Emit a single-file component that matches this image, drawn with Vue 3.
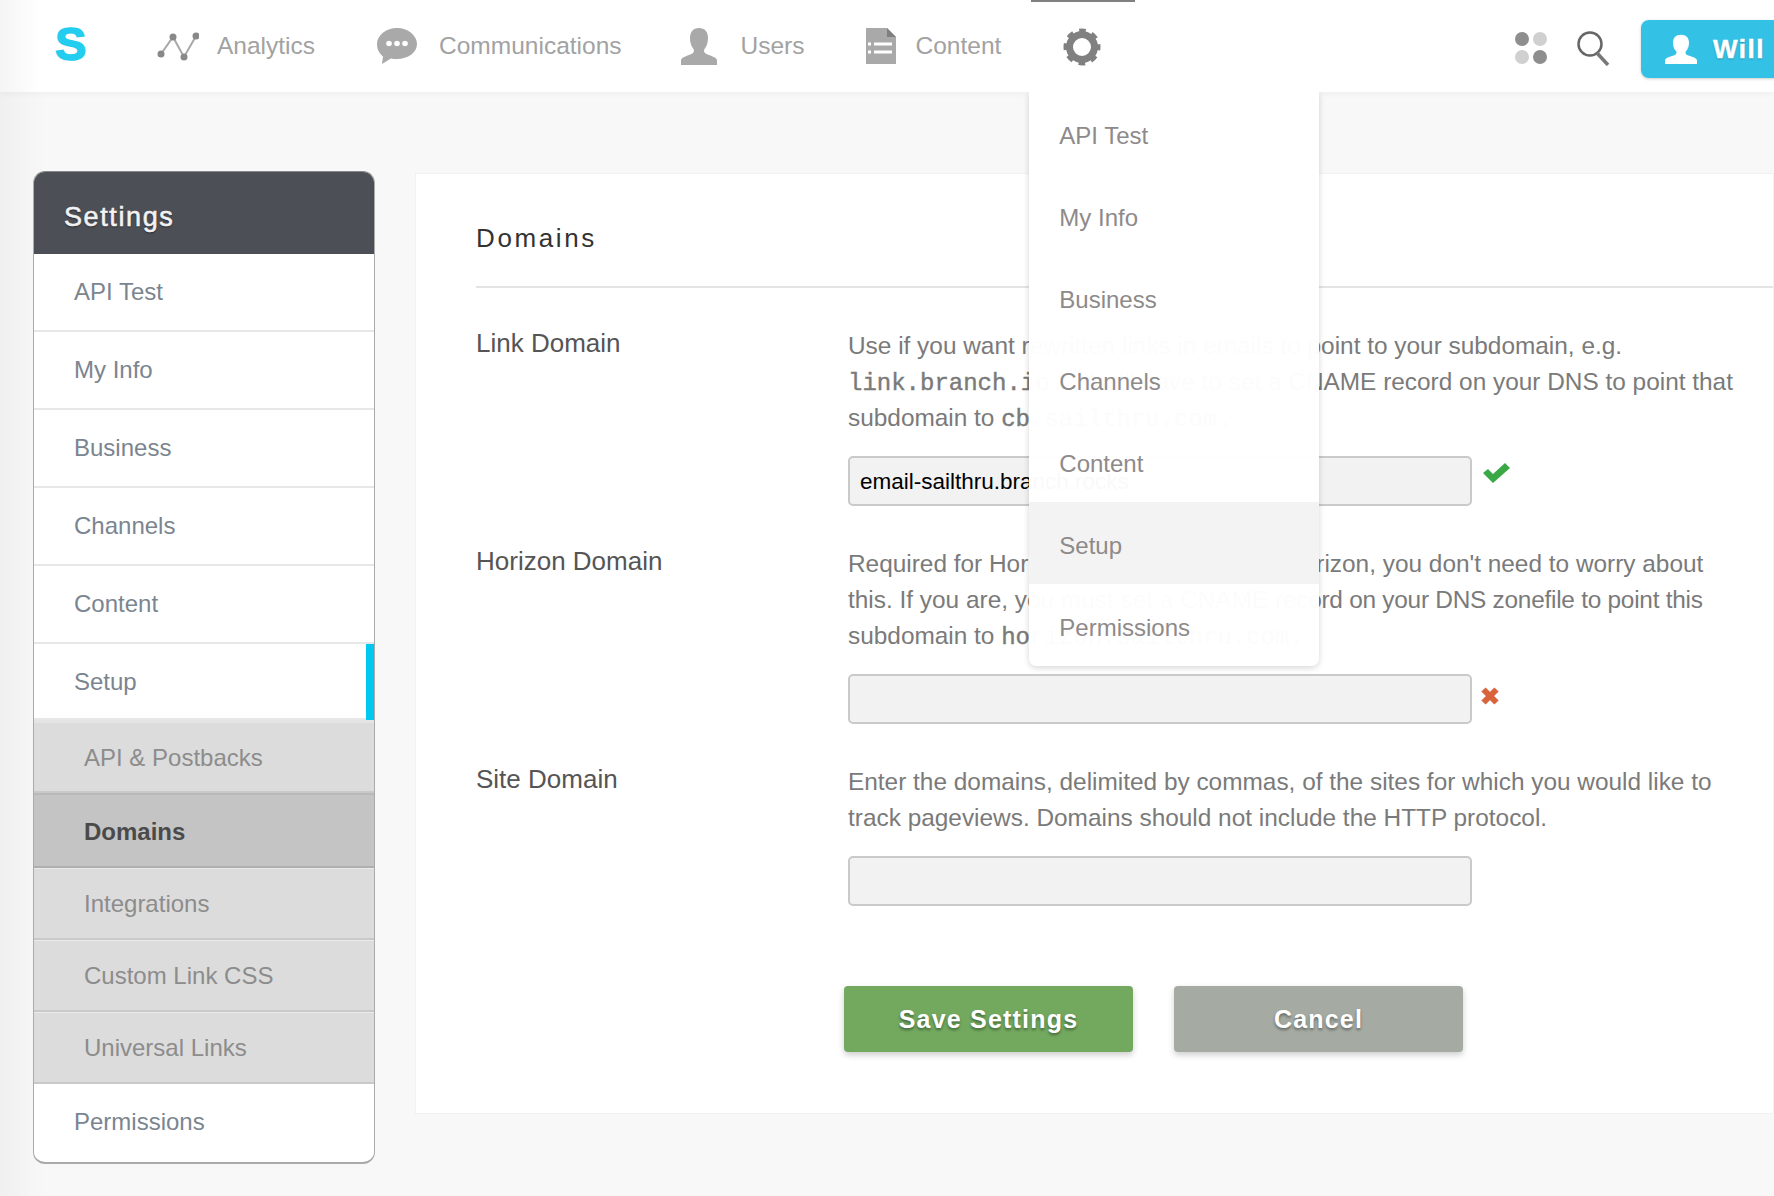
<template>
  <div class="page">
    <header class="topbar">
      <a class="logo">S</a>
      <nav class="nav">
        <a class="nav-item analytics">
          <svg width="42" height="30" viewBox="0 0 42 30">
            <path d="M4 23 L16 6 L27 26 L39 5" fill="none" stroke="#a8a8a8" stroke-width="2" />
            <circle cx="4" cy="23" r="3.5" fill="#888" />
            <circle cx="16" cy="6" r="3.5" fill="#888" />
            <circle cx="27" cy="26" r="3.5" fill="#888" />
            <circle cx="39" cy="5" r="3.5" fill="#888" />
          </svg>
          <span>Analytics</span>
        </a>
        <a class="nav-item comms">
          <svg width="40" height="38" viewBox="0 0 40 38">
            <path d="M20 1C9 1 0 8.500 0 17c0 6 3 10 6 12.500L5 37l9-5.500c2 .4 4 .5 6 .5 11 0 20-6.500 20-15S31 1 20 1z" fill="#a9a9a9" />
            <circle cx="12" cy="16.500" r="2.800" fill="#fff" />
            <circle cx="20" cy="16.500" r="2.800" fill="#fff" />
            <circle cx="28" cy="16.500" r="2.800" fill="#fff" />
          </svg>
          <span>Communications</span>
        </a>
        <a class="nav-item users">
          <svg width="36" height="38" viewBox="0 0 36 38">
            <path d="M18 1c-6 0-9 4-9 10 0 4 1 8 3.500 11 1 1.500.5 4-2 5C6 29 1 30 0 33v5h36v-5c-1-3-6-4-10.500-6-2.500-1-3-3.500-2-5C26 19 27 15 27 11c0-6-3-10-9-10z" fill="#a9a9a9" />
          </svg>
          <span>Users</span>
        </a>
        <a class="nav-item docs">
          <svg width="30" height="36" viewBox="0 0 30 36">
            <path d="M0 0h21l9 9v27H0z" fill="#a9a9a9" />
            <path d="M21 0l9 9h-9z" fill="#7f7f7f" />
            <path d="M2 16h3M8 16h18M2 24h3M8 24h18" stroke="#fff" stroke-width="3" />
          </svg>
          <span>Content</span>
        </a>
        <div class="settings-item">
          <svg width="38" height="38" viewBox="0 0 38 38">
            <circle cx="19" cy="19" r="16" fill="none" stroke="#808080" stroke-width="5" stroke-dasharray="6.400 6.160" stroke-dashoffset="3.200" />
            <circle cx="19" cy="19" r="12.500" fill="none" stroke="#808080" stroke-width="7" />
          </svg>
          <ul class="dropdown">
            <li v-for="item in menu" :key="item" :class="{ hover: item === 'Setup' }">{{ item }}</li>
          </ul>
        </div>
      </nav>
      <div class="tools">
        <span class="apps">
          <i class="dark"></i><i></i><i></i><i class="dark"></i>
        </span>
        <svg class="search" width="34" height="36" viewBox="0 0 34 36">
          <circle cx="14" cy="14" r="11.500" fill="none" stroke="#666" stroke-width="2.500" />
          <path d="M21 23l11 12" stroke="#777" stroke-width="3.500" />
        </svg>
        <a class="user-btn">
          <svg width="32" height="30" viewBox="0 0 36 38" preserveAspectRatio="none">
            <path d="M18 1c-6 0-9 4-9 10 0 4 1 8 3.500 11 1 1.500.5 4-2 5C6 29 1 30 0 33v5h36v-5c-1-3-6-4-10.500-6-2.500-1-3-3.500-2-5C26 19 27 15 27 11c0-6-3-10-9-10z" fill="#fff" />
          </svg>
          <span>Will</span>
        </a>
      </div>
    </header>

    <div class="body">
      <aside class="sidebar">
        <h3>Settings</h3>
        <ul>
          <li v-for="item in menu.slice(0, 6)" :key="item" class="row" :class="{ current: item === 'Setup' }">{{ item }}</li>
          <li
            v-for="sub in subMenu"
            :key="sub"
            class="sub"
            :class="{ active: sub === 'Domains' }"
          >{{ sub }}</li>
          <li class="row last">Permissions</li>
        </ul>
      </aside>

      <main class="panel">
        <h2>Domains</h2>
        <form class="form" @submit.prevent>
          <div class="field">
            <label>Link Domain</label>
            <div class="control">
              <p>Use if you want rewritten links in emails to point to your subdomain, e.g.<br><code class="keep">link.branch.io. </code>You'll have to set a CNAME record on your DNS to point that<br>subdomain to <code>cb.sailthru.com.</code></p>
              <div class="input-row">
                <input type="text" value="email-sailthru.branch.rocks">
                <svg class="status ok" width="27" height="20" viewBox="0 0 27 20">
                  <path d="M0 10L5 6L10 11L22 0L27 5L10 20Z" fill="#3aa845" />
                </svg>
              </div>
            </div>
          </div>
          <div class="field">
            <label>Horizon Domain</label>
            <div class="control">
              <p>Required for Horizon. If you're not using Horizon, you don't need to worry about<br>this. If you are, you must set a CNAME <span class="tight">record on your DNS zonefile to point this</span><br>subdomain to <code>horizon.sailthru.com.</code></p>
              <div class="input-row">
                <input type="text">
                <svg class="status bad" width="20" height="20" viewBox="0 0 20 20">
                  <path d="M3.500 3.500L16.500 16.500M16.500 3.500L3.500 16.500" stroke="#d9633a" stroke-width="6" />
                </svg>
              </div>
            </div>
          </div>
          <div class="field">
            <label>Site Domain</label>
            <div class="control">
              <p>Enter the domains, delimited by commas, of the sites for which you would like to<br>track pageviews. Domains should not include the HTTP protocol.</p>
              <div class="input-row">
                <input type="text">
              </div>
            </div>
          </div>
          <div class="actions">
            <button class="save">Save Settings</button>
            <button class="cancel">Cancel</button>
          </div>
        </form>
      </main>
    </div>
  </div>
</template>

<script setup>
const menu = ['API Test', 'My Info', 'Business', 'Channels', 'Content', 'Setup', 'Permissions'];
const subMenu = ['API & Postbacks', 'Domains', 'Integrations', 'Custom Link CSS', 'Universal Links'];
</script>

<style>
html, body {
  margin: 0;
  background: #f8f8f8;
}
</style>

<style scoped>
.page {
  width: 1774px;
  height: 1196px;
  overflow: hidden;
  font-family: "Liberation Sans", Arial, sans-serif;
  background: linear-gradient(to right, #f0f0f0, #f8f8f8 45px);
}

ul {
  margin: 0;
  padding: 0;
  list-style: none;
}

/* top bar */
.topbar {
  height: 92px;
  display: flex;
  align-items: center;
  background: linear-gradient(to right, #f5f5f5, #fff 40px);
  box-shadow: 0 2px 6px rgba(0, 0, 0, 0.04);
  position: relative;
  z-index: 2;
}

.logo {
  width: 157px;
  height: 92px;
  padding-left: 55px;
  box-sizing: border-box;
  flex: none;
  font-size: 47px;
  font-weight: bold;
  color: #22cdef;
  -webkit-text-stroke: 1.5px #22cdef;
  line-height: 88px;
}

.nav {
  display: flex;
  align-items: center;
  height: 92px;
}

.nav-item {
  display: flex;
  align-items: center;
  font-size: 24.5px;
  color: #a2a2a2;
}

.nav-item svg {
  flex: none;
}

.analytics { gap: 18px; margin-right: 62px; }
.comms { gap: 22px; margin-right: 59px; }
.users { gap: 24px; margin-right: 61px; }
.docs { gap: 20px; margin-right: 30px; }

.settings-item {
  position: relative;
  width: 104px;
  height: 92px;
  display: flex;
  align-items: center;
  justify-content: center;
  box-sizing: border-box;
  border-top: 2px solid #808080;
  padding-right: 2px;
}

.dropdown {
  position: absolute;
  left: -2px;
  top: 90px;
  width: 290px;
  background: rgba(255, 255, 255, 0.975);
  border-radius: 0 0 8px 8px;
  box-shadow: 0 2px 6px rgba(0, 0, 0, 0.16);
  clip-path: inset(0 -10px -10px -10px);
  z-index: 3;
}

.dropdown li {
  height: 82px;
  line-height: 87px;
  padding-left: 30px;
  font-size: 24px;
  color: #8e8a8a;
}

.dropdown li.hover {
  background: rgba(243, 243, 243, 0.98);
}

.tools {
  margin-left: auto;
  display: flex;
  align-items: center;
  flex: none;
  width: 259px;
}

.apps {
  flex: none;
  display: grid;
  grid-template-columns: 14px 14px;
  gap: 4px;
  margin: 4px 29px 0 0;
}

.apps i {
  width: 14px;
  height: 14px;
  border-radius: 50%;
  background: #d0d0d0;
}

.apps i.dark {
  background: #8e8e8e;
}

.search {
  flex: none;
  margin: 4px 31px 0 0;
}

.user-btn {
  height: 58px;
  width: 170px;
  flex: none;
  margin-top: 6px;
  background: #33c1e6;
  border-radius: 8px 0 0 8px;
  display: flex;
  align-items: center;
  gap: 16px;
  padding-left: 24px;
  box-sizing: border-box;
  box-shadow: 0 1px 3px rgba(0, 0, 0, 0.2);
  color: #fff;
  font-size: 26px;
  font-weight: bold;
  letter-spacing: 1.5px;
  -webkit-text-stroke: 0.5px #fff;
  text-shadow: 0 1px 2px rgba(0, 0, 0, 0.3);
}

/* page body */
.body {
  display: flex;
  align-items: flex-start;
  padding: 79px 0 0 33px;
  gap: 40px;
}

.sidebar {
  width: 342px;
  flex: none;
  box-sizing: border-box;
  border: 1px solid #aaa;
  border-top-color: #888;
  border-bottom-width: 2px;
  border-radius: 12px;
  overflow: hidden;
  background: #fff;
}

.sidebar h3 {
  margin: 0;
  height: 82px;
  line-height: 90px;
  background: #4d4f56;
  color: #f2f2f2;
  font-size: 27px;
  font-weight: normal;
  letter-spacing: 1.6px;
  padding-left: 30px;
  text-shadow: 0 1px 2px rgba(0, 0, 0, 0.6);
  -webkit-text-stroke: 0.6px #f2f2f2;
}

.row {
  height: 78px;
  box-sizing: border-box;
  line-height: 76px;
  padding-left: 40px;
  font-size: 24px;
  color: #7b8590;
  border-bottom: 2px solid #e7e7e7;
  position: relative;
}

.row.current {
  height: 76px;
}

.row.current::after {
  content: "";
  position: absolute;
  right: 0;
  top: 0;
  bottom: -2px;
  width: 8px;
  background: #00c8ee;
}

.row.last {
  border-bottom: none;
  height: 78px;
}

.sub {
  height: 72px;
  box-sizing: border-box;
  line-height: 70px;
  padding-left: 50px;
  font-size: 24px;
  color: #8c8c8c;
  background: #dcdcdc;
  border-bottom: 2px solid #c9c9c9;
  border-top: 1px solid #eaeaea;
}

.sub:nth-child(7) {
  height: 73px;
  line-height: 70px;
  border-top: 3px solid #e4e4e4;
}

.sub.active {
  height: 75px;
  line-height: 74px;
  background: #c4c4c4;
  color: #4a4a4a;
  font-weight: bold;
  border-top: 2px solid #b9b9b9;
  border-bottom: 2px solid #afafaf;
}

.panel {
  flex: 1;
  min-width: 0;
  height: 941px;
  margin-top: 2px;
  box-sizing: border-box;
  background: #fff;
  border: 1px solid #f1f1f1;
  padding-left: 60px;
}

.panel h2 {
  margin: 0;
  height: 114px;
  line-height: 129px;
  box-sizing: border-box;
  border-bottom: 2px solid #e4e4e4;
  font-size: 26px;
  font-weight: normal;
  letter-spacing: 2.6px;
  color: #333;
}

.form {
  padding-top: 39px;
}

.field {
  display: grid;
  grid-template-columns: 372px 1fr;
}

.field label {
  font-size: 26px;
  color: #555;
  line-height: 32px;
}

.control {
  padding-bottom: 39px;
}

.control p {
  margin: 0 0 20px;
  padding-top: 1px;
  font-size: 24.4px;
  line-height: 36px;
  color: #7a7a7a;
  white-space: nowrap;
}

.control code {
  font-family: "Liberation Mono", monospace;
  font-size: 24px;
  line-height: 0;
  -webkit-text-stroke: 0.4px #7a7a7a;
}

.control code.keep {
  white-space: pre;
}

.tight {
  letter-spacing: -0.25px;
}

.input-row {
  display: flex;
  align-items: flex-start;
}

.input-row input {
  width: 624px;
  height: 50px;
  box-sizing: border-box;
  background: #f2f2f2;
  border: 2px solid #cacaca;
  border-radius: 5px;
  padding: 2px 10px 0;
  font-family: "Liberation Sans", Arial, sans-serif;
  font-size: 22.5px;
  color: #000;
}

.status {
  flex: none;
}

.status.ok {
  margin: 7px 0 0 11px;
}

.status.bad {
  margin: 12px 0 0 8px;
}

.actions {
  display: flex;
  gap: 41px;
  margin: 41px 0 0 368px;
}

.actions button {
  width: 289px;
  height: 66px;
  border-radius: 4px;
  border: 2px solid transparent;
  font-family: "Liberation Sans", Arial, sans-serif;
  font-size: 25px;
  font-weight: bold;
  letter-spacing: 1.2px;
  color: #fff;
  text-shadow: 0 2px 3px rgba(0, 0, 0, 0.4);
  box-shadow: 0 3px 6px rgba(0, 0, 0, 0.2);
}

.save {
  background: #72a95f;
  border-color: #6b9e5a;
}

.cancel {
  background: #a5aba2;
  border-color: #8f8f8f;
}
</style>
